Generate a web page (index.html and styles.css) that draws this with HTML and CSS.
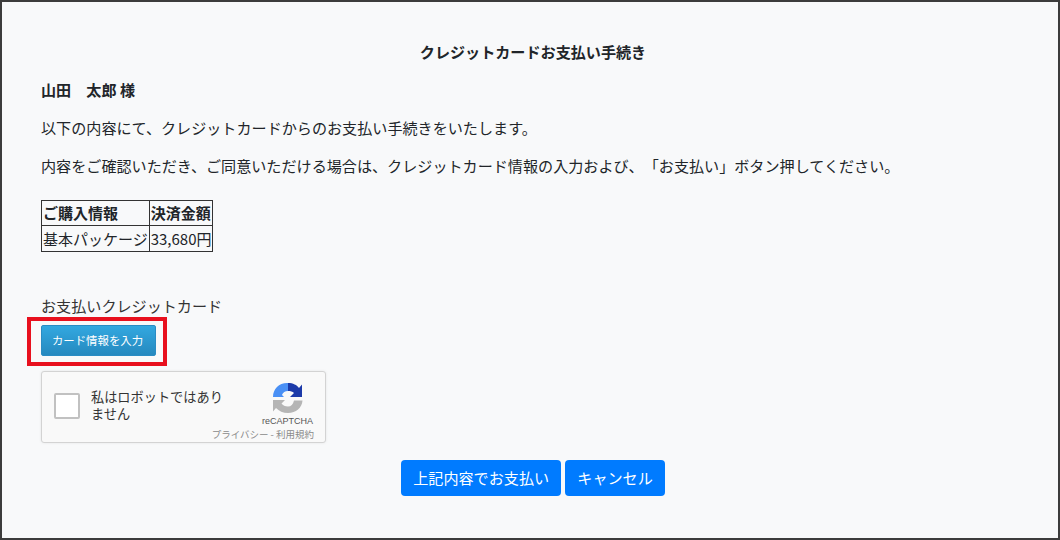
FILE: index.html
```html
<!DOCTYPE html>
<html lang="ja">
<head>
<meta charset="utf-8">
<title>クレジットカードお支払い手続き</title>
<link rel="stylesheet" href="styles.css">
</head>
<body>
<main class="frame">
  <h1 class="title">クレジットカードお支払い手続き</h1>
  <p class="line name">山田　太郎 様</p>
  <p class="line">以下の内容にて、クレジットカードからのお支払い手続きをいたします。</p>
  <p class="line">内容をご確認いただき、ご同意いただける場合は、クレジットカード情報の入力および、「お支払い」ボタン押してください。</p>
  <table class="order">
    <tr><th>ご購入情報</th><th>決済金額</th></tr>
    <tr class="order-row"><td>基本パッケージ</td><td>33,680円</td></tr>
  </table>
  <div class="card-label">お支払いクレジットカード</div>
  <div class="highlight"><button class="card-btn" type="button">カード情報を入力</button></div>
  <div class="captcha">
    <div class="captcha-check"></div>
    <div class="captcha-text">私はロボットではあり<br>ません</div>
    <div class="captcha-brand">
      <svg class="captcha-logo" viewBox="0 0 32 32" width="32" height="32" aria-hidden="true">
        <path fill="#4a90f5" d="M1 15 C1 7 7 1 15 1 L16 1 L16 9 C13 9 11 10.500 10 13 L12 15 Z"/>
        <path fill="#1c3aa9" d="M16 1 C21 1 25 3 27 6 L30 2.500 L30 15 L18 15 L22 11 C20.500 9.500 18.500 9 16 9 Z"/>
        <path fill="#b5b5b5" d="M1 18 L13 18 L9.500 21.500 C11 23.500 13 24.500 16 24.500 C19 24.500 21 22.500 22 18.500 L30.500 18.500 C30 26 24 31 16 31 C11 31 7 29 4 26 L1 29.500 Z"/>
      </svg>
      <div class="captcha-name">reCAPTCHA</div>
      <div class="captcha-links">プライバシー - 利用規約</div>
    </div>
  </div>
  <div class="actions">
    <button class="primary" type="button">上記内容でお支払い</button>
    <button class="primary" type="button">キャンセル</button>
  </div>
</main>
</body>
</html>
```
FILE: styles.css
```css
* { box-sizing: border-box; }
html, body { margin: 0; padding: 0; }
body {
  width: 1060px;
  height: 540px;
  overflow: hidden;
  font-family: "Noto Sans CJK JP", "Noto Sans", sans-serif;
  color: #212529;
  text-spacing-trim: space-all;
}
.frame {
  width: 1060px;
  height: 540px;
  border: 2px solid #3c3c3c;
  background: #f8f9fa;
  padding: 38px 33px 0 39px;
}
.title {
  margin: 0 0 16px;
  font-size: 15.1px;
  line-height: 22px;
  font-weight: 700;
  text-align: center;
}
.line {
  margin: 0 0 16px;
  font-size: 15.1px;
  line-height: 22px;
}
.name { font-weight: 700; }
.order {
  border-collapse: collapse;
  margin-top: 24px;
  font-size: 15px;
  line-height: 22px;
  color: #212529;
}
.order th, .order td {
  border: 1px solid #333;
  padding: 0 1px;
  height: 25px;
  text-align: left;
  white-space: nowrap;
}
.order th:last-child, .order td:last-child { padding-right: 0; }
.order .order-row td { height: 26px; }
.card-label {
  margin-top: 42px;
  font-size: 15.1px;
  line-height: 22px;
  color: #333;
}
.highlight {
  width: 140px;
  height: 49px;
  margin: 1px 0 5px -14px;
  border: 4px solid #e8101e;
  padding: 4px 0 0 10px;
}
.card-btn {
  display: block;
  width: 115px;
  height: 31px;
  margin: 0;
  padding: 0 2px 0 0;
  border: 1px solid #2a8cc4;
  border-radius: 2px;
  background: linear-gradient(#33a8e0, #2589bf);
  color: #fff;
  font: 400 11.4px/1 "Noto Sans CJK JP", sans-serif;
}
.captcha {
  position: relative;
  display: flex;
  width: 285px;
  height: 72px;
  border: 1px solid #d3d3d3;
  border-radius: 3px;
  background: #f9f9f9;
  box-shadow: 0 0 3px rgba(0, 0, 0, 0.08);
}
.captcha-check {
  flex: none;
  width: 26px;
  height: 26px;
  margin: 21px 0 0 12px;
  border: 2px solid #c1c1c1;
  border-radius: 2px;
  background: #fff;
}
.captcha-text {
  margin: 16px 0 0 11px;
  font-size: 13.2px;
  line-height: 17px;
  color: #333;
}
.captcha-brand {
  position: absolute;
  right: 11px;
  top: 10px;
  display: flex;
  flex-direction: column;
  align-items: flex-end;
}
.captcha-logo { margin-right: 10px; }
.captcha-name {
  margin-top: 2px;
  margin-right: 1px;
  font: 9px/11px "Liberation Sans", sans-serif;
  color: #555;
}
.captcha-links {
  margin-top: 1px;
  font-size: 9.5px;
  line-height: 13px;
  color: #8a8a8a;
  white-space: nowrap;
}
.actions {
  display: flex;
  justify-content: center;
  gap: 4px;
  margin-top: 17px;
}
.primary {
  height: 36px;
  padding: 0 12.1px;
  border: 0;
  border-radius: 4px;
  background: #007bff;
  color: #fff;
  font: 400 15.1px/1 "Noto Sans CJK JP", sans-serif;
}
```
